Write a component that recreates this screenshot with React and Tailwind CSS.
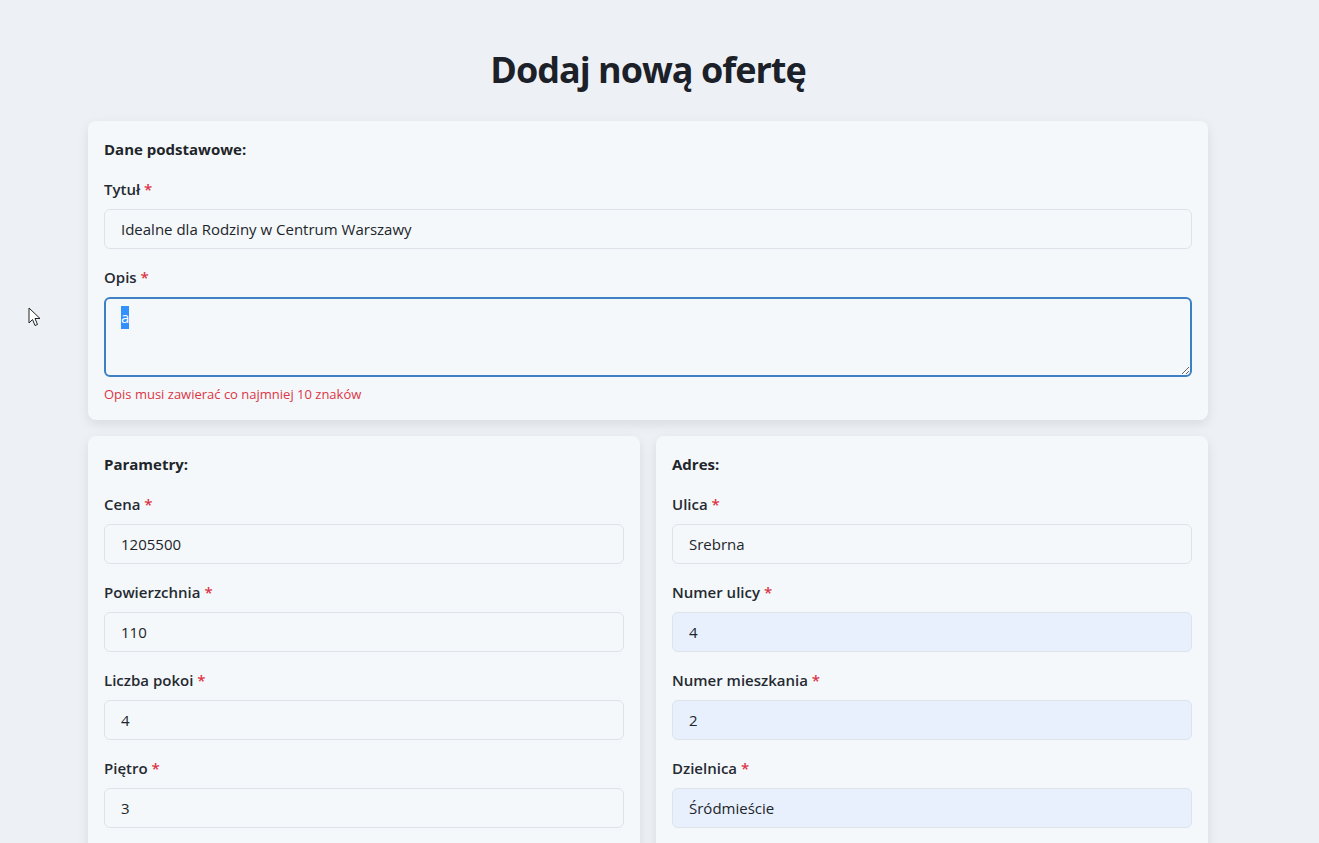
import { useEffect, useRef } from 'react';

const FONT = { fontFamily: '"Open Sans", "Noto Sans", sans-serif' };

function Label({ children }) {
  return (
    <label className="block text-[15px] leading-6 font-semibold text-[#252a31] mb-2">
      {children} <span className="text-[#dc3545]">*</span>
    </label>
  );
}

function Field({ label, value, filled }) {
  return (
    <div className="mb-4">
      <Label>{label}</Label>
      <input
        type="text"
        defaultValue={value}
        className={`block w-full h-10 px-4 text-[15px] text-[#212529] border border-[#dee3e9] rounded-md outline-none ${filled ? 'bg-[#e8f0fe]' : 'bg-[#f5f8fb]'}`}
      />
    </div>
  );
}

function Card({ title, children, className = '' }) {
  return (
    <div className={`bg-[#f5f8fb] rounded-lg shadow-[0_4px_12px_rgba(0,0,0,0.09)] p-4 ${className}`}>
      <h3 className="text-[15px] leading-6 font-bold text-[#212529] mb-4">{title}</h3>
      {children}
    </div>
  );
}

export default function App() {
  const ref = useRef(null);

  useEffect(() => {
    if (ref.current) {
      ref.current.focus();
      ref.current.select();
    }
  }, []);

  return (
    <div className="min-h-[843px] bg-[#edf1f5] relative overflow-hidden" style={FONT}>
      <div className="px-[88px] pt-[50px]">
        <div className="max-w-[1120px]">
          <h1 className="text-center text-[36px] leading-10 font-bold text-[#1c2129] mb-[31px] tracking-[-1px]">
            Dodaj nową ofertę
          </h1>

          <Card title="Dane podstawowe:">
            <Field label="Tytuł" value="Idealne dla Rodziny w Centrum Warszawy" />
            <div>
              <Label>Opis</Label>
              <textarea
                ref={ref}
                defaultValue="a"
                className="block w-full h-20 px-[15px] py-[7px] text-[15px] text-[#212529] bg-[#f5f8fb] border-2 border-[#3d80c4] rounded-md outline-none selection:bg-[#3390ff] selection:text-white"
              />
              <p className="mt-[7px] text-[13px] leading-5 text-[#dc3545]">Opis musi zawierać co najmniej 10 znaków</p>
            </div>
          </Card>

          <div className="grid grid-cols-2 gap-4 mt-4">
            <Card title="Parametry:">
              <Field label="Cena" value="1205500" />
              <Field label="Powierzchnia" value="110" />
              <Field label="Liczba pokoi" value="4" />
              <Field label="Piętro" value="3" />
            </Card>
            <Card title="Adres:">
              <Field label="Ulica" value="Srebrna" />
              <Field label="Numer ulicy" value="4" filled />
              <Field label="Numer mieszkania" value="2" filled />
              <Field label="Dzielnica" value="Śródmieście" filled />
            </Card>
          </div>
        </div>
      </div>

      <svg className="absolute left-[28px] top-[307px]" width="13" height="20" viewBox="0 0 13 20">
        <path d="M1 1 L1 16 L4.5 12.5 L7 18.5 L9.5 17.5 L7 11.5 L12 11.5 Z" fill="#fff" stroke="#222" strokeWidth="1" strokeLinejoin="round" />
      </svg>
    </div>
  );
}
